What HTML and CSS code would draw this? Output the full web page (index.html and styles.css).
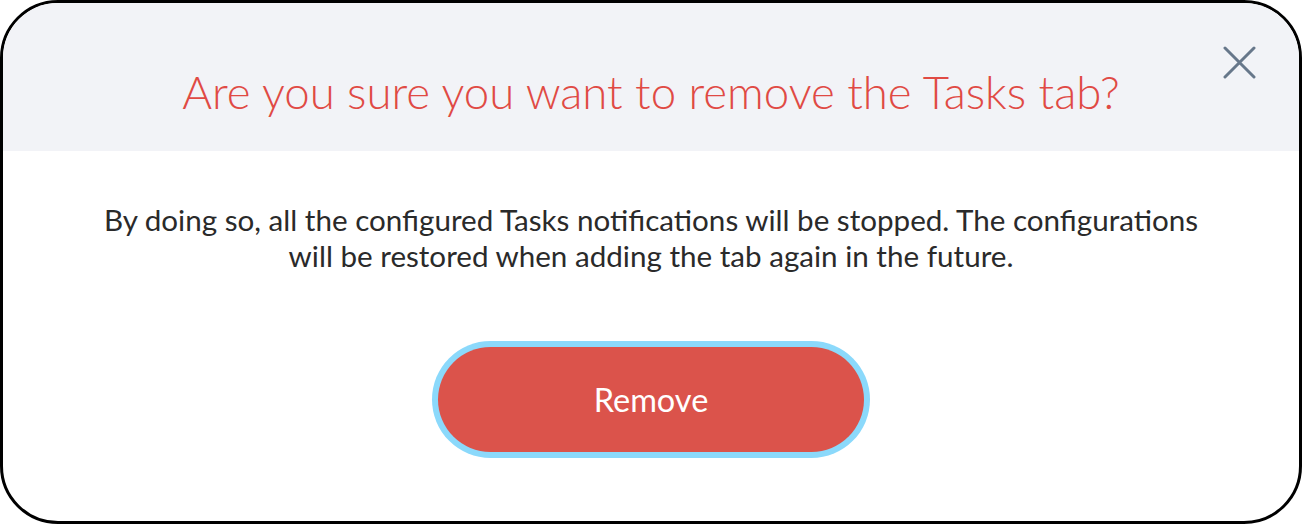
FILE: index.html
```html
<!DOCTYPE html>
<html>
<head>
<meta charset="utf-8">
<link rel="stylesheet" href="styles.css">
</head>
<body>
<div class="modal">
  <div class="modal-header">
    <h1 class="title">Are you sure you want to remove the Tasks tab?</h1>
    <button class="close" aria-label="Close">
      <svg width="34" height="34" viewBox="0 0 34 34"><path d="M3 3 L32 32 M32 3 L3 32" stroke="#67778a" stroke-width="3" stroke-linecap="round" fill="none"/></svg>
    </button>
  </div>
  <div class="modal-body">
    <p class="message">By doing so, all the configured Tasks notifications will be stopped. The configurations<br>will be restored when adding the tab again in the future.</p>
    <button class="remove">Remove</button>
  </div>
</div>
</body>
</html>
```
FILE: styles.css
```css
html, body {
  margin: 0;
  padding: 0;
  background: #ffffff;
}
.modal {
  box-sizing: border-box;
  width: 1302px;
  height: 524px;
  border: 3px solid #000;
  border-radius: 58px;
  overflow: hidden;
  background: #fff;
  font-family: Lato, "Open Sans", sans-serif;
  display: flex;
  flex-direction: column;
}
.modal-header {
  position: relative;
  box-sizing: border-box;
  height: 148px;
  padding-top: 28px;
  background: #f2f3f7;
  display: flex;
  align-items: center;
  justify-content: center;
  flex-shrink: 0;
}
.title {
  margin: 0;
  font-weight: 300;
  font-size: 45.6px;
  color: #e04a44;
}
.close {
  position: absolute;
  right: 43px;
  top: 42px;
  width: 34px;
  height: 34px;
  padding: 0;
  border: 0;
  background: none;
}
.close svg { display: block; }
.modal-body {
  display: flex;
  flex-direction: column;
  align-items: center;
}
.message {
  margin: 51px 0 0;
  font-size: 29.6px;
  line-height: 36px;
  color: #2a2a2a;
  text-align: center;
}
.remove {
  margin-top: 73px;
  width: 426px;
  height: 105px;
  border: 0;
  border-radius: 53px;
  background: #db534b;
  color: #fff;
  font-family: Lato, sans-serif;
  font-size: 32.5px;
  box-shadow: 0 0 0 6px #8bd9fb;
}
```
